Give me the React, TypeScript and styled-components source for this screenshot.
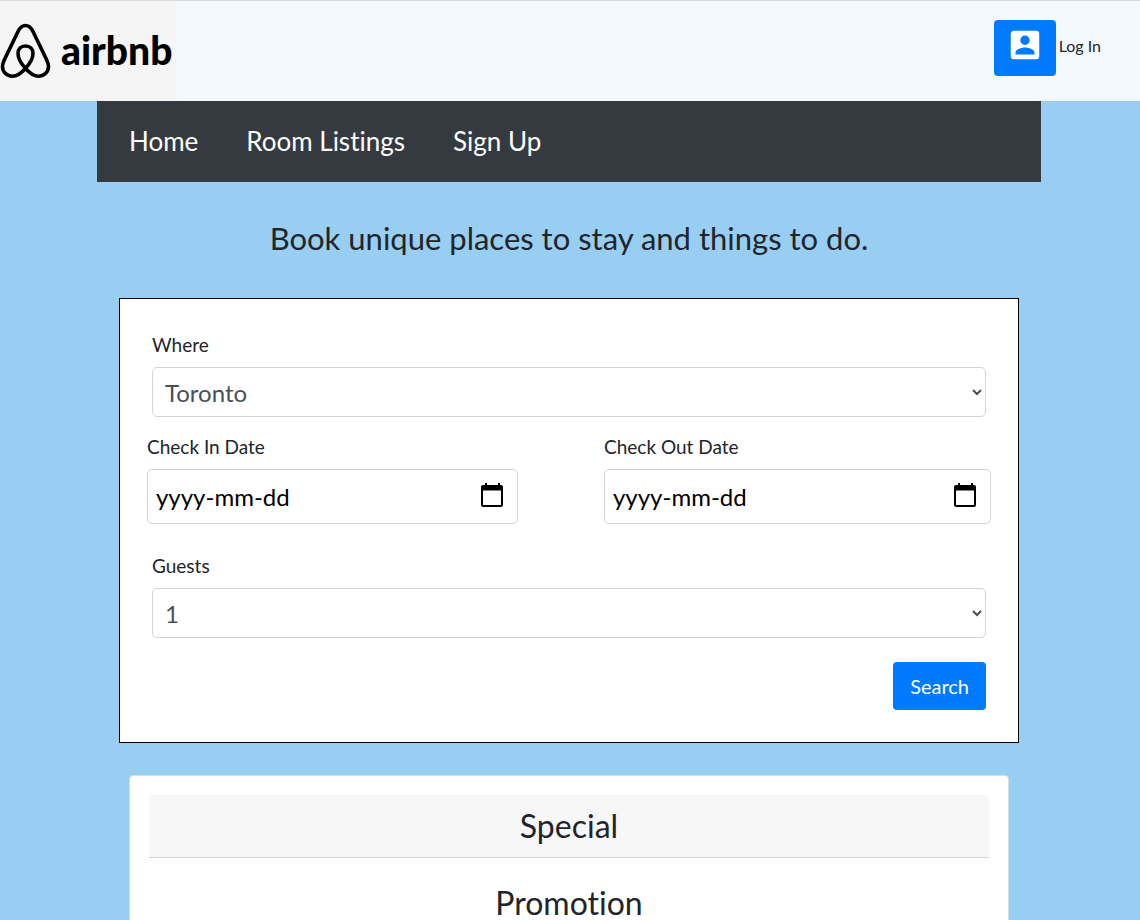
import React from "react";
import styled, { createGlobalStyle } from "styled-components";

const GlobalStyle = createGlobalStyle`
  *, *::before, *::after { box-sizing: border-box; }
  body {
    margin: 0;
    background: #99cef3;
    color: #212529;
    font-family: Lato, "Open Sans", sans-serif;
    font-size: 19px;
    font-variant-ligatures: none;
    line-height: 28px;
  }
  h1, h2, h3 { margin: 0; font-weight: 400; }
`;

const Header = styled.header`
  display: flex;
  align-items: stretch;
  justify-content: space-between;
  height: 101px;
  padding-right: 39px;
  border-top: 1px solid #d6dbe1;
  background: #f3f9ff;
`;

const Logo = styled.a`
  display: flex;
  align-items: center;
  gap: 10px;
  width: 176px;
  background: #f5f5f5;
  color: #000;
  font-size: 39px;
  font-weight: 900;
  line-height: 96px;
  text-decoration: none;
`;

const LogoText = styled.span`
  padding-bottom: 2px;
`;

const LogoMark = styled.svg`
  flex: none;
  width: 51px;
  height: 56px;
`;

const Account = styled.div`
  display: flex;
  align-items: center;
  gap: 3px;
  height: 56px;
  margin-top: 19px;
  font-size: 16px;
`;

const AccountLabel = styled.span`
  padding-bottom: 4px;
`;

const AccountButton = styled.button`
  display: flex;
  justify-content: center;
  width: 62px;
  height: 56px;
  padding: 6px 0 0;
  border: 0;
  border-radius: 4px;
  background: #007bff;
  color: #fff;
`;

const AccountIcon = styled.svg`
  width: 38px;
  height: 38px;
`;

const Page = styled.main`
  padding: 0 99px 0 97px;
`;

const Nav = styled.nav`
  display: flex;
  align-items: center;
  gap: 48px;
  height: 81px;
  padding: 0 32px 2px;
  background: #343a40;
`;

const NavLink = styled.a`
  color: #fff;
  font-size: 26px;
  line-height: 40px;
  text-decoration: none;
`;

const Title = styled.h1`
  padding: 36px 0 40px;
  font-size: 31px;
  line-height: 40px;
  text-align: center;
`;

const SearchForm = styled.form`
  display: flex;
  flex-direction: column;
  margin: 0 22px;
  padding: 32px;
  border: 1px solid #000;
  background: #fff;
`;

const Field = styled.div`
  display: flex;
  flex-direction: column;
  gap: 8px;
`;

const Select = styled.select`
  width: 100%;
  height: 50px;
  padding: 6px 8px;
  border: 1px solid #ced4da;
  border-radius: 5px;
  background: #fff;
  color: #495057;
  font: 24px Lato, sans-serif;
`;

const Dates = styled.div`
  display: grid;
  grid-template-columns: 371fr 387fr;
  gap: 86px;
  margin: 16px -5px 28px;
`;

const DateBox = styled.div`
  display: flex;
  align-items: center;
  height: 55px;
  padding: 0 13px 0 8px;
  border: 1px solid #ced4da;
  border-radius: 5px;
  background: #fff;
`;

const DateInput = styled.input`
  flex: 1;
  min-width: 0;
  padding: 0;
  border: 0;
  outline: 0;
  background: transparent;
  color: #000;
  font: 24px Lato, sans-serif;
  &::placeholder { color: #000; opacity: 1; }
`;

const CalendarButton = styled.button`
  display: flex;
  padding: 0 0 4px;
  border: 0;
  background: none;
  color: #000;
`;

const CalendarIcon = styled.svg`
  width: 24px;
  height: 26px;
`;

const SubmitButton = styled.button`
  align-self: flex-end;
  height: 48px;
  margin-top: 24px;
  padding: 0 17px;
  border: 0;
  border-radius: 4px;
  background: #007bff;
  color: #fff;
  font: 20px Lato, sans-serif;
`;

const Card = styled.section`
  margin: 32px 32px 0;
  padding: 19px;
  border: 1px solid #cfdde7;
  border-radius: 4px;
  background: #fff;
  text-align: center;
`;

const CardHeader = styled.h2`
  padding: 12px 20px;
  border-bottom: 1px solid #d5d5d5;
  border-radius: 4px 4px 0 0;
  background: #f7f7f7;
  font-size: 32px;
  line-height: 38px;
`;

const CardTitle = styled.h3`
  padding-top: 26px;
  font-size: 32px;
  line-height: 38px;
`;

function DateField({ id, label }: { id: string; label: string }) {
  return (
    <Field>
      <label htmlFor={id}>{label}</label>
      <DateBox>
        <DateInput id={id} type="text" placeholder="yyyy-mm-dd" />
        <CalendarButton type="button" aria-label={`Choose ${label}`}>
          <CalendarIcon viewBox="0 0 24 26" aria-hidden="true">
            <path
              fill="currentColor"
              fillRule="evenodd"
              d="M5 1h2v2h11V1h2v2h1a2 2 0 0 1 2 2v18a2 2 0 0 1-2 2H3a2 2 0 0 1-2-2V5a2 2 0 0 1 2-2h2zM3 8.500v14.500h18V8.500z"
            />
          </CalendarIcon>
        </CalendarButton>
      </DateBox>
    </Field>
  );
}

export default function App() {
  return (
    <>
      <GlobalStyle />
      <Header>
        <Logo href="#">
          <LogoMark viewBox="0 0 51 56" aria-hidden="true">
            <path
              fill="none"
              stroke="#000"
              strokeWidth="3.6"
              strokeLinejoin="round"
              d="M25.500 45.500C21 40.500 18 35.500 18 30.500C18 26 21 23 25.500 23C30 23 33 26 33 30.500C33 35.500 30 40.500 25.500 45.500C21 50.500 17 53.200 12.500 53.200C6.500 53.200 2.500 48.800 2.500 43.500C2.500 41 3.200 39.200 4.500 36.500L18 8.500C20 4.500 22 2.500 25.500 2.500C29 2.500 31 4.500 33 8.500L46.500 36.500C47.800 39.200 48.500 41 48.500 43.500C48.500 48.800 44.500 53.200 38.500 53.200C34 53.200 30 50.500 25.500 45.500Z"
            />
          </LogoMark>
          <LogoText>airbnb</LogoText>
        </Logo>
        <Account>
          <AccountButton type="button" aria-labelledby="login-label">
            <AccountIcon viewBox="0 0 24 24" aria-hidden="true">
              <path
                fill="currentColor"
                fillRule="evenodd"
                d="M5 3h14a2 2 0 0 1 2 2v14a2 2 0 0 1-2 2H5a2 2 0 0 1-2-2V5c0-1.100.9-2 2-2zm7 3a3 3 0 1 0 0 6 3 3 0 0 0 0-6zM6 16.700V18h12v-1.300c0-2-4-3.100-6-3.100s-6 1.100-6 3.100z"
              />
            </AccountIcon>
          </AccountButton>
          <AccountLabel id="login-label">Log In</AccountLabel>
        </Account>
      </Header>
      <Page>
        <Nav>
          <NavLink href="#">Home</NavLink>
          <NavLink href="#">Room Listings</NavLink>
          <NavLink href="#">Sign Up</NavLink>
        </Nav>
        <Title>Book unique places to stay and things to do.</Title>
        <SearchForm>
          <Field>
            <label htmlFor="where">Where</label>
            <Select id="where">
              <option>Toronto</option>
            </Select>
          </Field>
          <Dates>
            <DateField id="check-in" label="Check In Date" />
            <DateField id="check-out" label="Check Out Date" />
          </Dates>
          <Field>
            <label htmlFor="guests">Guests</label>
            <Select id="guests">
              <option>1</option>
            </Select>
          </Field>
          <SubmitButton type="button">Search</SubmitButton>
        </SearchForm>
        <Card>
          <CardHeader>Special</CardHeader>
          <CardTitle>Promotion</CardTitle>
        </Card>
      </Page>
    </>
  );
}
